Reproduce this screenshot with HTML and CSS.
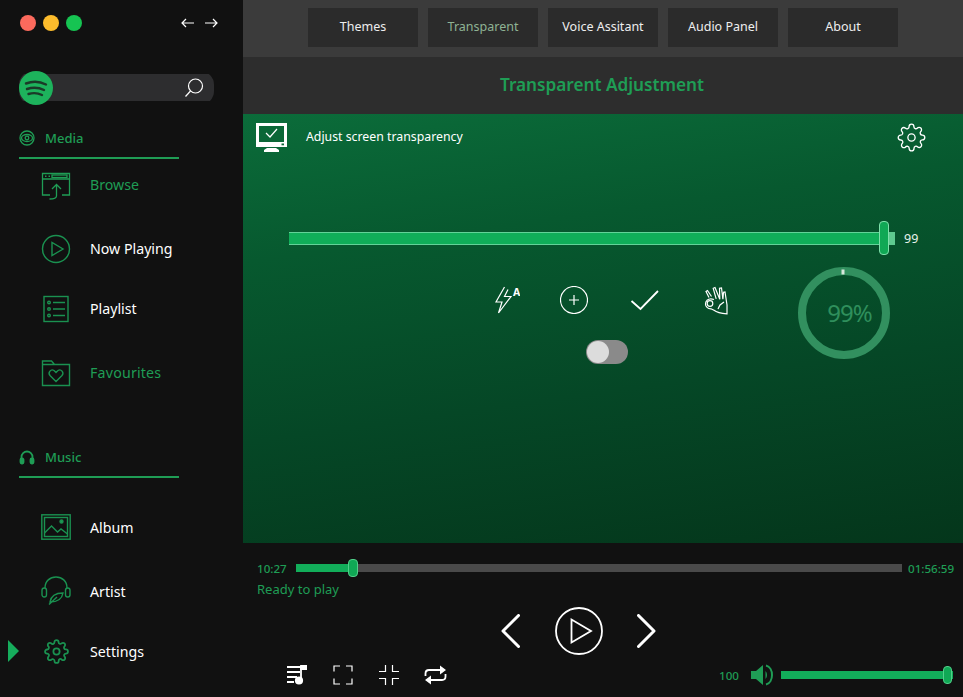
FILE: index.html
```html
<!DOCTYPE html>
<html lang="en">
<head>
<meta charset="utf-8">
<title>Transparent Adjustment</title>
<link rel="stylesheet" href="styles.css">
</head>
<body>
<svg class="defs" width="0" height="0" aria-hidden="true">
  <symbol id="gear" viewBox="0 0 24 24">
    <path d="M12 15a3 3 0 1 0 0-6 3 3 0 0 0 0 6z"/>
    <path d="M19.4 15a1.65 1.65 0 0 0 .33 1.82l.06.06a2 2 0 0 1 0 2.83 2 2 0 0 1-2.83 0l-.06-.06a1.65 1.65 0 0 0-1.82-.33 1.65 1.65 0 0 0-1 1.51V21a2 2 0 0 1-2 2 2 2 0 0 1-2-2v-.09A1.65 1.65 0 0 0 9 19.4a1.65 1.65 0 0 0-1.82.33l-.06.06a2 2 0 0 1-2.83 0 2 2 0 0 1 0-2.83l.06-.06a1.65 1.65 0 0 0 .33-1.82 1.65 1.65 0 0 0-1.51-1H3a2 2 0 0 1-2-2 2 2 0 0 1 2-2h.09A1.65 1.65 0 0 0 4.6 9a1.65 1.65 0 0 0-.33-1.82l-.06-.06a2 2 0 0 1 0-2.83 2 2 0 0 1 2.83 0l.06.06a1.65 1.65 0 0 0 1.82.33H9a1.65 1.65 0 0 0 1-1.51V3a2 2 0 0 1 2-2 2 2 0 0 1 2 2v.09a1.65 1.65 0 0 0 1 1.51 1.65 1.65 0 0 0 1.82-.33l.06-.06a2 2 0 0 1 2.83 0 2 2 0 0 1 0 2.83l-.06.06a1.65 1.65 0 0 0-.33 1.82V9a1.65 1.65 0 0 0 1.51 1H21a2 2 0 0 1 2 2 2 2 0 0 1-2 2h-.09a1.65 1.65 0 0 0-1.51 1z"/>
  </symbol>
</svg>
<div class="app">
  <aside class="sidebar">
    <div class="titlebar">
      <div class="lights">
        <span class="light light-red"></span>
        <span class="light light-yellow"></span>
        <span class="light light-green"></span>
      </div>
      <div class="history">
        <svg class="stroke-white" width="14" height="10" viewBox="0 0 14 10"><path d="M13 5H1M5 1L1 5l4 4"/></svg>
        <svg class="stroke-white" width="14" height="10" viewBox="0 0 14 10"><path d="M1 5h12M9 1l4 4-4 4"/></svg>
      </div>
    </div>
    <div class="search">
      <svg class="logo" width="34" height="34" viewBox="0 0 34 34">
        <circle cx="17" cy="17" r="17" fill="#1db35c"/>
        <path d="M7 12.500c6-2.200 14-2 20 1M8 18c5-1.700 12-1.500 17 1M9.500 23c4-1.200 9.500-1 13.500 1" fill="none" stroke="#1b3a28" stroke-width="2.400" stroke-linecap="round"/>
      </svg>
      <svg class="stroke-white search-icon" width="20" height="20" viewBox="0 0 20 20"><circle cx="11.500" cy="8" r="7"/><path d="M6.500 13L1.500 18.500"/></svg>
    </div>

    <div class="section-head section-media">
      <svg class="stroke-green" width="16" height="16" viewBox="0 0 16 16"><circle cx="8" cy="8" r="7"/><ellipse cx="8" cy="8" rx="5.500" ry="3.500"/><circle cx="8" cy="8" r="1.800"/></svg>
      <span>Media</span>
    </div>
    <nav class="nav nav-media">
      <a class="nav-item is-green">
        <span class="nav-icon"><svg class="stroke-green" width="30" height="30" viewBox="0 0 30 30"><path d="M9 25H1.500V3.500h27V25H21M1.500 9h27"/><path d="M4 6.250h1.500M7.500 6.250h1.500"/><rect x="11" y="5" width="15" height="2.500"/><path d="M15.500 26V14.500M11 19l4.500-4.500L20 19M15.500 26c0 2-2 3-7 3"/></svg></span>
        <span class="nav-label">Browse</span>
      </a>
      <a class="nav-item">
        <span class="nav-icon"><svg class="stroke-green-dim" width="30" height="30" viewBox="0 0 30 30"><circle cx="15" cy="15" r="13.500"/><path d="M11 8.500v13l11-6.500z"/></svg></span>
        <span class="nav-label">Now Playing</span>
      </a>
      <a class="nav-item">
        <span class="nav-icon"><svg class="stroke-green-dim" width="30" height="30" viewBox="0 0 30 30"><rect x="3" y="2.500" width="24" height="25"/><circle cx="8" cy="8.500" r="1.300"/><circle cx="8" cy="15" r="1.300"/><circle cx="8" cy="21.500" r="1.300"/><path d="M12 8.500h12M12 15h12M12 21.500h12"/></svg></span>
        <span class="nav-label">Playlist</span>
      </a>
      <a class="nav-item is-green">
        <span class="nav-icon"><svg class="stroke-green-dim" width="30" height="30" viewBox="0 0 30 30"><path d="M1.500 27.500V3h9l3 3.500h15V27.500zM1.500 6.500h12"/><path d="M15 23.500l-6-6c-2.500-3 1-7 4-5l2 2 2-2c3-2 6.500 2 4 5z"/></svg></span>
        <span class="nav-label tracked">Favourites</span>
      </a>
    </nav>

    <div class="section-head section-music">
      <svg class="stroke-green-bold" width="16" height="16" viewBox="0 0 16 16"><path d="M2.500 11V8a5.500 5.500 0 0 1 11 0v3"/><rect x="1.500" y="9.500" width="3" height="5" rx="1.200" fill="#1f9d55"/><rect x="11.500" y="9.500" width="3" height="5" rx="1.200" fill="#1f9d55"/></svg>
      <span>Music</span>
    </div>
    <nav class="nav nav-music">
      <a class="nav-item">
        <span class="nav-icon"><svg class="stroke-green-dim" width="30" height="30" viewBox="0 0 30 30"><rect x="0.800" y="2.800" width="28.400" height="24.400"/><rect x="3.500" y="5.500" width="23" height="19"/><path d="M3.500 21l7-7 6 6 3.500-3 6.500 5"/><circle cx="20.500" cy="9.500" r="1.500" fill="#1f9d55"/></svg></span>
        <span class="nav-label">Album</span>
      </a>
      <a class="nav-item">
        <span class="nav-icon"><svg class="stroke-green-dim" width="30" height="30" viewBox="0 0 30 30"><path d="M4 12C4 5 9 1 15 1s11 4 11 11"/><rect x="1" y="12" width="4.500" height="9" rx="2.200"/><rect x="24.500" y="12" width="4.500" height="9" rx="2.200"/><path d="M9 26c1-6 6-9 13-9-1 6-6 9-13 9zM8 28.500l8-7.500"/></svg></span>
        <span class="nav-label">Artist</span>
      </a>
      <a class="nav-item is-active">
        <span class="active-arrow"></span>
        <span class="nav-icon"><svg class="gear-nav" width="25" height="25"><use href="#gear"/></svg></span>
        <span class="nav-label">Settings</span>
      </a>
    </nav>
  </aside>

  <main class="main">
    <header class="tabs">
      <button class="tab">Themes</button>
      <button class="tab tab-active">Transparent</button>
      <button class="tab">Voice Assitant</button>
      <button class="tab">Audio Panel</button>
      <button class="tab">About</button>
    </header>
    <h1 class="page-title">Transparent Adjustment</h1>

    <section class="panel">
      <div class="panel-head">
        <svg width="31" height="29" viewBox="0 0 31 29">
          <path d="M0 0h31v24H0z" fill="#fff"/>
          <rect x="3" y="3" width="25" height="16" fill="#0b6737"/>
          <path d="M10 10l4 4 7-8" fill="none" stroke="#fff" stroke-width="1.200"/>
          <rect x="25.500" y="20.500" width="2.500" height="1.800" fill="#0b6737"/>
          <path d="M8 29v-2l3-2h9l3 2v2z" fill="#fff"/>
        </svg>
        <span class="panel-label">Adjust screen transparency</span>
        <svg class="gear-panel" width="29" height="29"><use href="#gear"/></svg>
      </div>

      <div class="opacity-row">
        <div class="opacity-track">
          <div class="opacity-fill"></div>
          <span class="opacity-thumb"></span>
        </div>
        <span class="opacity-value">99</span>
      </div>

      <div class="controls">
        <div class="controls-left">
          <div class="action-icons">
            <svg class="stroke-white" width="25" height="28" viewBox="0 0 25 28">
              <path d="M9.500 1L1 16h6L3.500 27 16 10.500h-6.500L13 3.500"/>
              <text class="bolt-a" x="18" y="10">A</text>
            </svg>
            <svg class="stroke-white" width="28" height="28" viewBox="0 0 28 28"><circle cx="14" cy="14" r="13.500"/><path d="M14 9v10M9 14h10"/></svg>
            <svg class="stroke-white-bold" width="34" height="28" viewBox="0 0 34 28"><path d="M3.500 15l9 8L30 5"/></svg>
            <svg class="stroke-white" width="28" height="30" viewBox="0 0 28 30">
              <circle cx="8" cy="18.500" r="2.800"/>
              <path d="M12 14.500c-2-.8-5-1-7 .8-2 2-2 5.500 0 7 1 1 2.500 1.500 4 1.500l3 1.500c2.500 2 6 3 13 3.500V20L23 7l-1.500.3-.6 7L19.500 3l-2 .3.300 11L13 2.500l-1.800.8 3 10.500"/>
              <path d="M7 12.500L4 6.500 5.500 5.500 9.500 11.500M22 17l-4 3-2 4"/>
            </svg>
          </div>
          <div class="toggle"><span class="toggle-knob"></span></div>
        </div>
        <svg class="ring" width="92" height="92" viewBox="0 0 92 92">
          <circle cx="46" cy="46" r="42" fill="none" stroke="#32905f" stroke-width="8"/>
          <rect x="43.500" y="2.500" width="3" height="5" fill="#d7e7dc"/>
          <text class="ring-text" x="51.500" y="55" text-anchor="middle">99%</text>
        </svg>
      </div>
    </section>

    <footer class="player">
      <div class="progress-row">
        <span class="time time-start">10:27</span>
        <div class="track progress-track">
          <div class="track-fill progress-fill"></div>
          <span class="thumb progress-thumb"></span>
        </div>
        <span class="time time-end">01:56:59</span>
      </div>
      <div class="status">Ready to play</div>
      <div class="transport">
        <svg class="stroke-white-heavy" width="19" height="34" viewBox="0 0 19 34"><path d="M17.500 1.500L2 17l15.500 15.500"/></svg>
        <svg class="stroke-white-med play-button" width="48" height="48" viewBox="0 0 48 48"><circle cx="24" cy="24" r="23"/><path d="M16.500 12.500v23L36 24z"/></svg>
        <svg class="stroke-white-heavy" width="19" height="34" viewBox="0 0 19 34"><path d="M1.500 1.500L17 17 1.500 32.500"/></svg>
      </div>
      <div class="bottom-row">
        <div class="tool-icons">
          <svg class="stroke-white-med" width="20" height="20" viewBox="0 0 20 20"><path d="M0 2h14M0 7h13M0 12h10M0 17h7M14 1v14"/><path d="M14 1h6v3h-6z" fill="#fff"/><circle cx="12" cy="15.500" r="3.200" fill="#fff"/></svg>
          <svg class="stroke-white" width="20" height="20" viewBox="0 0 20 20"><path d="M1 6.500V1h6M13 1h6v5.500M19 13.500V19h-6M7 19H1v-5.500"/></svg>
          <svg class="stroke-white" width="20" height="20" viewBox="0 0 20 20"><path d="M0 6.500h6.500V0M13.500 0v6.500H20M20 13.500h-6.500V20M6.500 20v-6.500H0"/></svg>
          <svg class="stroke-white-med repeat-icon" width="23" height="20" viewBox="0 0 23 20"><path d="M1.500 11V8.500c0-2 1.500-3.500 3.500-3.500h14M21.500 9v2.500c0 2-1.500 3.500-3.500 3.500H4"/><path d="M16 .5L22 5l-6 4.500zM7 10.500L1 15l6 4.500z" fill="#fff" stroke="none"/></svg>
        </div>
        <div class="volume">
          <span class="time">100</span>
          <svg width="23" height="22" viewBox="0 0 23 22">
            <path d="M0 7h5l7-6v20l-7-6H0z" fill="#1f9d55"/>
            <path d="M14.500 7c2 2 2 6 0 8z" fill="#1f9d55"/>
            <path d="M15 1.500c8 2 8 17 0 19" fill="none" stroke="#1f9d55" stroke-width="2"/>
          </svg>
          <div class="track volume-track">
            <div class="track-fill volume-fill"></div>
            <span class="thumb volume-thumb"></span>
          </div>
        </div>
      </div>
    </footer>
  </main>
</div>
</body>
</html>
```

FILE: styles.css
```css
* { box-sizing: border-box; }
html, body { margin: 0; height: 100%; background: #111; }
body { font-family: "Noto Sans", "Open Sans", sans-serif; color: #fff; overflow: hidden; }
.defs { position: absolute; }
svg { display: block; flex: none; }

.stroke-white, .stroke-white-bold, .stroke-white-med, .stroke-white-heavy { fill: none; stroke: #fff; }
.stroke-white { stroke-width: 1.200; }
.stroke-white-bold { stroke-width: 1.800; }
.stroke-white-med { stroke-width: 1.800; }
.stroke-white-heavy { stroke-width: 3; stroke-linecap: round; stroke-linejoin: round; }
.stroke-green { fill: none; stroke: #1f9d55; stroke-width: 1.300; }
.stroke-green-dim { fill: none; stroke: #1a9150; stroke-width: 1.400; }
.stroke-green-bold { fill: none; stroke: #1f9d55; stroke-width: 1.800; }

.app { display: grid; grid-template-columns: 243px 1fr; width: 963px; height: 697px; }

/* sidebar */
.sidebar { position: relative; background: #111; padding-left: 19px; }
.titlebar { display: flex; align-items: center; justify-content: space-between; height: 46px; padding: 0 25px 0 1px; }
.lights { display: flex; gap: 7px; }
.light { width: 16px; height: 16px; border-radius: 50%; }
.light-red { background: #fc6a5d; }
.light-yellow { background: #fdbc2c; }
.light-green { background: #16c452; }
.history { display: flex; gap: 9px; }

.search { display: flex; align-items: center; justify-content: space-between; width: 195px; height: 34px; margin-top: 25px; padding-right: 10px; border-radius: 14px; background: linear-gradient(#0000 3px, #2d2d2f 3px, #2d2d2f 30px, #0000 30px); }

.section-head { display: flex; align-items: center; gap: 10px; width: 160px; height: 31px; padding-bottom: 9px; border-bottom: 2px solid #1f9d55; color: #1f9d55; font-size: 13px; font-weight: 500; }
.section-media { margin-top: 23px; }
.section-music { margin-top: 54px; }

.nav-media { margin-top: 6px; }
.nav-music { margin-top: 29px; }
.nav-item { position: relative; display: flex; align-items: center; gap: 12px; height: 40px; margin-left: 15px; margin-bottom: 20px; font-size: 14.200px; color: #fff; }
.nav-item:nth-child(odd) { margin-bottom: 24px; }
.nav-item.is-green { color: #1f9d55; }
.nav-media .nav-label { margin-bottom: 2px; }
.nav-icon { display: flex; align-items: center; justify-content: center; width: 44px; height: 40px; }
.tracked { letter-spacing: .2px; }
.active-arrow { position: absolute; left: -26px; top: 9px; border-left: 11px solid #16ad5c; border-top: 11px solid transparent; border-bottom: 11px solid transparent; }
.gear-nav { fill: none; stroke: #1a9150; stroke-width: 1.700; }

/* main */
.main { display: flex; flex-direction: column; min-width: 0; }
.tabs { display: flex; gap: 10px; height: 57px; padding: 8px 0 0 65px; background: #3b3b3b; }
.tab { width: 110px; height: 39px; padding: 0 0 2px; border: 0; border-radius: 0; background: #2b2b2b; color: #eee; font: 12.500px "Noto Sans", "Open Sans", sans-serif; }
.tab-active { color: #8fb394; }
.page-title { display: flex; align-items: center; justify-content: center; height: 57px; margin: 0; padding: 0 2px 3px 0; background: #2d2d2d; color: #1f9d55; font-size: 17.200px; font-weight: 600; }

.panel { height: 429px; padding-top: 9px; background: linear-gradient(172deg, #0b6c3a 0%, #07592f 28%, #054726 62%, #04361b 100%); }
.panel-head { display: flex; align-items: center; padding: 0 37px 0 13px; }
.panel-label { margin: 0 0 2px 19px; font-size: 12.300px; }
.gear-panel { margin-left: auto; fill: none; stroke: #fff; stroke-width: 1.100; }

.opacity-row { display: flex; align-items: center; gap: 9px; height: 34px; margin-top: 69px; padding-left: 46px; }
.opacity-track { position: relative; width: 606px; height: 13px; background: #5ec98f; }
.opacity-fill { width: 590px; height: 100%; background: #10ae59; border-top: 1px solid #62d398; border-bottom: 1px solid #62d398; }
.opacity-thumb { position: absolute; left: 590px; top: -11px; width: 10px; height: 34px; border: 1px solid #7fe0aa; border-radius: 4px; background: #10a855; }
.opacity-value { font-size: 12.500px; color: #e8f2ea; }

.controls { display: flex; align-items: flex-start; margin: 12px 0 0 252px; }
.controls-left { width: 235px; padding-top: 19px; margin-right: 68px; }
.action-icons { display: flex; align-items: center; gap: 40px; height: 28px; }
.bolt-a { font: 700 10.500px "Noto Sans", sans-serif; fill: #fff; stroke: none; }
.toggle { position: relative; width: 42px; height: 24px; margin: 26px 0 0 91px; border-radius: 12px; background: #8a8a8a; }
.toggle-knob { position: absolute; left: 1px; top: 1px; width: 22px; height: 22px; border-radius: 50%; background: #dcdcdc; }
.ring-text { font: 24px "Noto Sans", sans-serif; letter-spacing: -1px; fill: #2f8f5c; }

/* player */
.player { flex: 1; padding: 16px 9px 0 14px; background: #111; }
.progress-row { display: flex; align-items: center; gap: 6px; height: 18px; }
.time { font-size: 11.600px; font-weight: 500; color: #1f9d55; }
.time-start { width: 33px; flex: none; }
.track { position: relative; height: 8px; background: #4a4a4a; }
.progress-track { width: 606px; flex: none; }
.time-end { white-space: nowrap; }
.track-fill { height: 100%; background: #12ae5a; }
.progress-fill { width: 57px; }
.thumb { position: absolute; top: -5px; width: 10px; height: 18px; border: 1px solid #52cf8a; border-radius: 4px; background: #10a855; }
.progress-thumb { left: 52px; }
.status { height: 18px; margin-top: 3px; font-size: 13px; line-height: 18px; color: #1f9d55; }

.transport { display: flex; align-items: center; gap: 35px; height: 48px; margin: 9px 0 0 244px; }
.play-button { margin-right: -1px; }

.bottom-row { display: flex; align-items: center; height: 22px; margin: 9px 0 0 30px; }
.tool-icons { display: flex; align-items: center; gap: 26px; }
.repeat-icon { margin-left: -1px; }
.volume { display: flex; align-items: center; margin-left: auto; padding-right: 1px; }
.volume svg { margin: 0 7px 0 12px; }
.volume-track { width: 172px; background: #12ae5a; }
.volume-fill { width: 100%; }
.volume-thumb { left: 162px; width: 9px; }
```
